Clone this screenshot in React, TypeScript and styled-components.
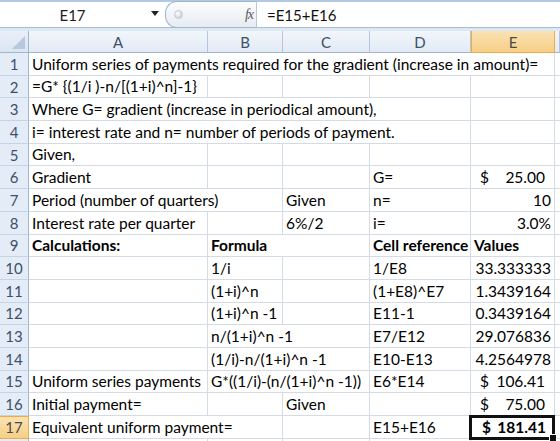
import React from 'react';
import styled, { createGlobalStyle, css } from 'styled-components';

const GlobalStyle = createGlobalStyle`
  html, body {
    margin: 0;
    padding: 0;
    background: #ffffff;
  }
  body {
    width: 560px;
    height: 441px;
    overflow: hidden;
    font-family: 'Lato', 'Liberation Sans', sans-serif;
  }
`;

const Window = styled.div`
  width: 560px;
  height: 441px;
  overflow: hidden;
  background: #dde8f5;
`;

const FormulaBar = styled.div`
  display: flex;
  align-items: stretch;
  height: 25px;
  border-top: 2px solid #b3c8e3;
  border-bottom: 1px solid #a7bcd6;
  background: #ffffff;
`;

const NameBox = styled.div`
  position: relative;
  width: 165px;
  display: flex;
  align-items: center;
  justify-content: center;
  font-size: 15px;
  color: #1d1d1d;
  padding-right: 20px;
  box-sizing: border-box;
`;

const DropArrow = styled.span`
  position: absolute;
  right: 6px;
  top: 9px;
  width: 0;
  height: 0;
  border-left: 4px solid transparent;
  border-right: 4px solid transparent;
  border-top: 5px solid #222;
`;

const FxPill = styled.div`
  width: 92px;
  display: flex;
  align-items: center;
  justify-content: space-between;
  padding: 0 3px 0 8px;
  box-sizing: border-box;
  border: 1px solid #9fb4cf;
  border-right: 1px solid #b8c6d8;
  border-radius: 12px 0 0 12px;
  background: linear-gradient(#fbfcfd, #e7ecf2);
  margin: -1px 0;
`;

const Knob = styled.span`
  width: 7px;
  height: 7px;
  border-radius: 50%;
  background: radial-gradient(circle at 35% 35%, #ffffff, #b9c3cf);
  border: 1px solid #c5ccd6;
`;

const FxLabel = styled.span`
  font-family: 'Liberation Serif', serif;
  font-style: italic;
  font-size: 14px;
  color: #5a5a5a;
  letter-spacing: -1px;
`;

const FormulaText = styled.div`
  flex: 1;
  display: flex;
  align-items: center;
  padding-left: 10px;
  font-size: 15px;
  color: #111;
`;

const Sheet = styled.div`
  margin-top: 3px;
  display: grid;
  grid-template-columns: 29px 179px 75px 87px 101px 84px 1fr;
  grid-template-rows: 22px repeat(17, 22.7px) 10px;
  background: #ffffff;
`;

const headerBase = css`
  display: flex;
  align-items: center;
  justify-content: center;
  font-size: 15px;
  color: #3d4f69;
  box-sizing: border-box;
`;

const ColHeader = styled.div<{ $active?: boolean }>`
  ${headerBase}
  border-right: 1px solid #b4c6dc;
  border-bottom: 1px solid #9eb6ce;
  background: ${(p) =>
    p.$active
      ? 'linear-gradient(#fae2b4, #f6cf86)'
      : 'linear-gradient(#f2f6fb, #e2eaf5)'};
  ${(p) => p.$active && 'border: 1px solid #f2a94a; border-top: 0; color: #4a4a4a;'}
`;

const Corner = styled.div`
  position: relative;
  background: linear-gradient(#e9eff8, #dbe5f2);
  border-right: 1px solid #9eb6ce;
  border-bottom: 1px solid #9eb6ce;
  &::after {
    content: '';
    position: absolute;
    right: 3px;
    bottom: 3px;
    border-left: 13px solid transparent;
    border-bottom: 13px solid #b7c7dc;
  }
`;

const RowHeader = styled.div<{ $active?: boolean; $clipped?: boolean }>`
  ${headerBase}
  border-right: 1px solid #9eb6ce;
  border-bottom: 1px solid #c5d3e5;
  background: ${(p) => (p.$active ? 'linear-gradient(#fae2b4, #f6cf86)' : '#e4ecf7')};
  ${(p) => p.$active && 'border: 1px solid #f2a94a; border-left: 0; color: #4a4a4a;'}
  ${(p) =>
    p.$clipped &&
    css`
      align-items: flex-start;
      overflow: hidden;
      padding-top: 2px;
      line-height: 20px;
      border-bottom: 0;
    `}
`;

const Cell = styled.div<{ $span?: number; $align?: 'left' | 'right'; $bold?: boolean }>`
  grid-column: span ${(p) => p.$span ?? 1};
  display: flex;
  align-items: flex-end;
  justify-content: ${(p) => (p.$align === 'right' ? 'flex-end' : 'flex-start')};
  padding: 0 3px 1px 3px;
  box-sizing: border-box;
  border-right: 1px solid #d4dbe7;
  border-bottom: 1px solid #d4dbe7;
  font-size: 15.5px;
  line-height: 20px;
  font-weight: ${(p) => (p.$bold ? 700 : 400)};
  color: #000;
  white-space: nowrap;
  overflow: visible;
  min-width: 0;
`;

const Money = styled(Cell)<{ $selected?: boolean }>`
  justify-content: space-between;
  padding: 0 9px 1px 9px;
  ${(p) =>
    p.$selected &&
    css`
      position: relative;
      border: 3px solid #111;
      margin: -1px 0 -1px -2px;
      padding: 0 6px 0 10px;
    `}
`;

const FillHandle = styled.span`
  position: absolute;
  right: -5px;
  bottom: -5px;
  width: 6px;
  height: 6px;
  background: #111;
  border: 1px solid #fff;
`;

const Overflow = styled.div`
  border-bottom: 1px solid #d4dbe7;
`;

const Tail = styled.div`
  border-right: 1px solid #d4dbe7;
`;

type Row = {
  cells: { text?: string; span?: number; align?: 'left' | 'right'; bold?: boolean; money?: string; selected?: boolean }[];
};

const rows: Row[] = [
  { cells: [{ text: 'Uniform series of payments required for the gradient (increase in amount)=', span: 5 }] },
  { cells: [{ text: '=G* {(1/i )-n/[(1+i)^n]-1}' }, {}, {}, {}, {}] },
  { cells: [{ text: 'Where G= gradient (increase in periodical amount),', span: 4 }, {}] },
  { cells: [{ text: 'i= interest rate and n= number of periods of payment.', span: 4 }, {}] },
  { cells: [{ text: 'Given,' }, {}, {}, {}, {}] },
  { cells: [{ text: 'Gradient' }, {}, {}, { text: 'G=' }, { money: '25.00' }] },
  { cells: [{ text: 'Period (number of quarters)', span: 2 }, { text: 'Given' }, { text: 'n=' }, { text: '10', align: 'right' }] },
  { cells: [{ text: 'Interest rate per quarter' }, {}, { text: '6%/2' }, { text: 'i=' }, { text: '3.0%', align: 'right' }] },
  {
    cells: [
      { text: 'Calculations:', bold: true },
      { text: 'Formula', bold: true, span: 2 },
      { text: 'Cell reference', bold: true },
      { text: 'Values', bold: true },
    ],
  },
  { cells: [{}, { text: '1/i' }, {}, { text: '1/E8' }, { text: '33.333333', align: 'right' }] },
  { cells: [{}, { text: '(1+i)^n' }, {}, { text: '(1+E8)^E7' }, { text: '1.3439164', align: 'right' }] },
  { cells: [{}, { text: '(1+i)^n -1' }, {}, { text: 'E11-1' }, { text: '0.3439164', align: 'right' }] },
  { cells: [{}, { text: 'n/(1+i)^n -1', span: 2 }, { text: 'E7/E12' }, { text: '29.076836', align: 'right' }] },
  { cells: [{}, { text: '(1/i)-n/(1+i)^n -1', span: 2 }, { text: 'E10-E13' }, { text: '4.2564978', align: 'right' }] },
  {
    cells: [
      { text: 'Uniform series payments' },
      { text: 'G*((1/i)-(n/(1+i)^n -1))', span: 2 },
      { text: 'E6*E14' },
      { money: '106.41' },
    ],
  },
  { cells: [{ text: 'Initial payment=' }, {}, { text: 'Given' }, {}, { money: '75.00' }] },
  { cells: [{ text: 'Equivalent uniform payment=', span: 2 }, {}, { text: 'E15+E16' }, { money: '181.41', selected: true }] },
];

const columns = ['A', 'B', 'C', 'D', 'E'];

export default function App() {
  return (
    <Window>
      <GlobalStyle />
      <FormulaBar>
        <NameBox>
          E17
          <DropArrow />
        </NameBox>
        <FxPill>
          <Knob />
          <FxLabel>fx</FxLabel>
        </FxPill>
        <FormulaText>=E15+E16</FormulaText>
      </FormulaBar>
      <Sheet>
        <Corner />
        {columns.map((c) => (
          <ColHeader key={c} $active={c === 'E'}>
            {c}
          </ColHeader>
        ))}
        <ColHeader />
        {rows.map((row, i) => (
          <React.Fragment key={i}>
            <RowHeader $active={i === 16}>{i + 1}</RowHeader>
            {row.cells.map((cell, j) =>
              cell.money ? (
                <Money key={j} $selected={cell.selected} $bold={cell.selected}>
                  <span>$</span>
                  <span>{cell.money}</span>
                  {cell.selected && <FillHandle />}
                </Money>
              ) : (
                <Cell key={j} $span={cell.span} $align={cell.align} $bold={cell.bold}>
                  {cell.text}
                </Cell>
              )
            )}
            <Overflow />
          </React.Fragment>
        ))}
        <RowHeader $clipped>18</RowHeader>
        <Tail />
        <Tail />
        <Tail />
        <Tail />
        <Tail />
        <div />
      </Sheet>
    </Window>
  );
}
